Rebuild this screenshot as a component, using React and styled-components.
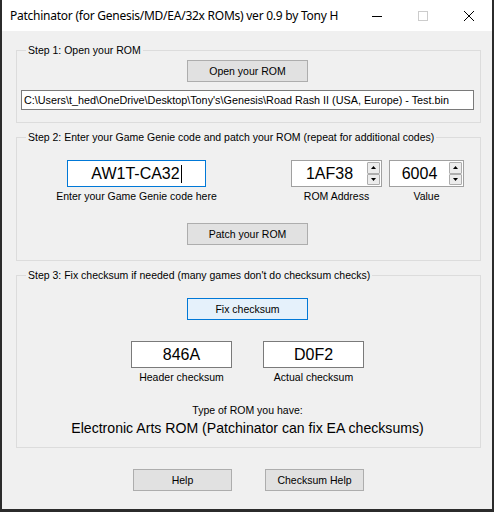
import React from 'react';
import styled, { createGlobalStyle } from 'styled-components';

const GlobalStyle = createGlobalStyle`
  html, body {
    margin: 0;
    padding: 0;
    background: #2b2b2b;
  }
  body {
    font-family: "Liberation Sans", Arial, sans-serif;
    color: #000;
  }
  * {
    box-sizing: border-box;
  }
`;

const Window = styled.div`
  width: 494px;
  height: 512px;
  display: flex;
  flex-direction: column;
  border: solid #2b2b2b;
  border-width: 0 2px 3px 2px;
  background: #f0f0f0;
`;

const TitleBar = styled.div`
  height: 31px;
  flex: 0 0 31px;
  display: flex;
  align-items: center;
  background: #fff;
`;

const Title = styled.div`
  flex: 1;
  padding-left: 8px;
  font-family: "Noto Sans", "Liberation Sans", sans-serif;
  font-size: 12px;
  letter-spacing: -0.25px;
  color: #000;
  white-space: nowrap;
`;

const CaptionButton = styled.div`
  width: 46px;
  height: 31px;
  display: flex;
  align-items: center;
  justify-content: center;
`;

const Client = styled.div`
  flex: 1;
  display: flex;
  flex-direction: column;
  padding: 13px 11px 0 14px;
  font-size: 10.5px;
`;

const GroupBox = styled.fieldset`
  margin: ${({ $first }) => ($first ? '0' : '8px')} 0 0;
  padding: ${({ $pt }) => $pt}px 6px ${({ $pb }) => $pb}px 4px;
  border: 1px solid #dcdcdc;
  min-width: 0;
  display: flex;
  flex-direction: column;
`;

const Legend = styled.legend`
  margin-left: 5px;
  padding: 0 2px;
  font-size: 10.5px;
  line-height: 13px;
`;

const Button = styled.div`
  width: ${({ $w }) => $w || 121}px;
  height: 22px;
  display: flex;
  align-items: center;
  justify-content: center;
  font-size: 10.5px;
  background: ${({ $focused }) => ($focused ? '#e5f1fb' : '#e1e1e1')};
  border: 1px solid ${({ $focused }) => ($focused ? '#0078d7' : '#adadad')};
`;

const Centered = styled.div`
  display: flex;
  justify-content: center;
  gap: ${({ $gap }) => $gap || 0}px;
  margin-top: ${({ $mt }) => $mt || 0}px;
`;

const PathBox = styled.div`
  margin-top: 8px;
  height: 20px;
  display: flex;
  align-items: center;
  padding: 0 2px;
  font-size: 10.8px;
  background: #fff;
  border: 1px solid #7a7a7a;
  white-space: nowrap;
  overflow: hidden;
`;

const FieldRow = styled.div`
  display: flex;
  align-items: flex-start;
`;

const Field = styled.div`
  display: flex;
  flex-direction: column;
  align-items: center;
  width: ${({ $w }) => $w}px;
  margin-left: ${({ $ml }) => $ml || 0}px;
`;

const BigBox = styled.div`
  width: ${({ $w }) => $w}px;
  height: 27px;
  display: flex;
  align-items: center;
  justify-content: center;
  font-size: 16px;
  background: #fff;
  border: 1px solid ${({ $focused }) => ($focused ? '#0078d7' : '#7a7a7a')};
`;

const Caret = styled.span`
  display: inline-block;
  width: 1px;
  height: 18px;
  margin-left: 1px;
  background: #000;
`;

const Spinner = styled.div`
  width: 100%;
  height: 27px;
  display: flex;
  background: #fff;
  border: 1px solid #a0a0a0;
`;

const SpinText = styled.div`
  flex: 1;
  display: flex;
  align-items: center;
  justify-content: center;
  font-size: 16px;
`;

const SpinColumn = styled.div`
  width: 14px;
  display: flex;
  flex-direction: column;
  padding: 1px 1px 1px 0;
`;

const SpinButton = styled.div`
  flex: 1;
  display: flex;
  align-items: center;
  justify-content: center;
  background: #ececec;
  border: 1px solid #adadad;
  border-radius: 1px;
`;

const Caption = styled.div`
  margin-top: 3px;
  font-size: 10.5px;
  line-height: 13px;
  white-space: nowrap;
`;

const Info = styled.div`
  text-align: center;
  font-size: ${({ $big }) => ($big ? '14.1px' : '10.5px')};
  line-height: ${({ $big }) => ($big ? '16px' : '13px')};
  margin-top: ${({ $mt }) => $mt}px;
  white-space: nowrap;
`;

const Arrow = ({ up }) => (
  <svg width="5" height="3" viewBox="0 0 5 3">
    <polygon points={up ? '0,3 5,3 2.5,0' : '0,0 5,0 2.5,3'} fill="#000" />
  </svg>
);

const SpinBox = ({ value }) => (
  <Spinner>
    <SpinText>{value}</SpinText>
    <SpinColumn>
      <SpinButton><Arrow up /></SpinButton>
      <SpinButton><Arrow /></SpinButton>
    </SpinColumn>
  </Spinner>
);

const App = () => (
  <>
    <GlobalStyle />
    <Window>
      <TitleBar>
        <Title>Patchinator (for Genesis/MD/EA/32x ROMs) ver 0.9 by Tony H</Title>
        <CaptionButton>
          <svg width="10" height="10" viewBox="0 0 10 10">
            <line x1="0" y1="5.5" x2="10" y2="5.5" stroke="#000" strokeWidth="1" />
          </svg>
        </CaptionButton>
        <CaptionButton>
          <svg width="10" height="10" viewBox="0 0 10 10">
            <rect x="0.5" y="0.5" width="9" height="9" fill="none" stroke="#cccccc" strokeWidth="1" />
          </svg>
        </CaptionButton>
        <CaptionButton>
          <svg width="10" height="10" viewBox="0 0 10 10">
            <path d="M0,0 L10,10 M10,0 L0,10" stroke="#000" strokeWidth="1" />
          </svg>
        </CaptionButton>
      </TitleBar>

      <Client>
        <GroupBox $first $pt={3} $pb={12}>
          <Legend>Step 1: Open your ROM</Legend>
          <Centered>
            <Button>Open your ROM</Button>
          </Centered>
          <PathBox>C:\Users\t_hed\OneDrive\Desktop\Tony's\Genesis\Road Rash II (USA, Europe) - Test.bin</PathBox>
        </GroupBox>

        <GroupBox $pt={16} $pb={15}>
          <Legend>Step 2: Enter your Game Genie code and patch your ROM (repeat for additional codes)</Legend>
          <FieldRow>
            <Field $w={139} $ml={46}>
              <BigBox $w={139} $focused>
                AW1T-CA32<Caret />
              </BigBox>
              <Caption>Enter your Game Genie code here</Caption>
            </Field>
            <Field $w={91} $ml={85}>
              <SpinBox value="1AF38" />
              <Caption>ROM Address</Caption>
            </Field>
            <Field $w={75} $ml={7}>
              <SpinBox value="6004" />
              <Caption>Value</Caption>
            </Field>
          </FieldRow>
          <Centered $mt={20}>
            <Button>Patch your ROM</Button>
          </Centered>
        </GroupBox>

        <GroupBox $pt={16} $pb={11}>
          <Legend>Step 3: Fix checksum if needed (many games don't do checksum checks)</Legend>
          <Centered>
            <Button $focused>Fix checksum</Button>
          </Centered>
          <Centered $mt={21} $gap={31}>
            <Field $w={101}>
              <BigBox $w={101}>846A</BigBox>
              <Caption>Header checksum</Caption>
            </Field>
            <Field $w={101}>
              <BigBox $w={101}>D0F2</BigBox>
              <Caption>Actual checksum</Caption>
            </Field>
          </Centered>
          <Info $mt={20}>Type of ROM you have:</Info>
          <Info $big $mt={3}>Electronic Arts ROM (Patchinator can fix EA checksums)</Info>
        </GroupBox>

        <Centered $mt={21} $gap={33}>
          <Button $w={99}>Help</Button>
          <Button $w={99}>Checksum Help</Button>
        </Centered>
      </Client>
    </Window>
  </>
);

export default App;
